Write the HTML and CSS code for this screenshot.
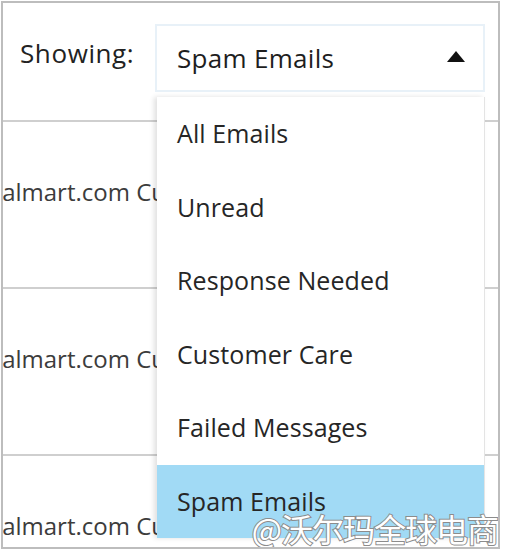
FILE: index.html
```html
<!DOCTYPE html>
<html lang="en">
<head>
    <meta charset="UTF-8">
    <meta name="viewport" content="width=device-width, initial-scale=1.0">
    <title>Showing: Spam Emails</title>
    <link rel="stylesheet" href="styles.css">
</head>
<body>
    <div class="frame">
        <div class="header">
            <span class="label">Showing:</span>
            <div class="select">
                <span>Spam Emails</span>
                <svg class="caret" width="18" height="11" viewBox="0 0 18 11">
                    <polygon points="9,0 18,11 0,11" fill="#111"></polygon>
                </svg>
            </div>
        </div>

        <div class="row"><span class="sender">Walmart.com Customer Care</span></div>
        <div class="row"><span class="sender">Walmart.com Customer Care</span></div>
        <div class="row last"><span class="sender">Walmart.com Customer Care</span></div>

        <ul class="menu">
            <li>All Emails</li>
            <li>Unread</li>
            <li>Response Needed</li>
            <li>Customer Care</li>
            <li>Failed Messages</li>
            <li class="active">Spam Emails</li>
        </ul>

        <div class="watermark">@沃尔玛全球电商</div>
    </div>
</body>
</html>
```

FILE: styles.css
```css
body {
    margin: 0;
    padding: 0;
    background-color: #ffffff;
    font-family: "Open Sans", "Noto Sans", sans-serif;
    color: #333;
}

.frame {
    position: relative;
    margin: 1px 0 0 1px;
    width: 495px;
    height: 544px;
    border: 2px solid #bdbdbd;
    overflow: hidden;
}

.header {
    height: 119px;
    border-bottom: 2px solid #cfcfcf;
    display: flex;
    align-items: flex-start;
    box-sizing: border-box;
    padding-top: 21px;
}

.label {
    margin-left: 17px;
    margin-top: 11px;
    width: 135px;
    font-size: 26px;
    letter-spacing: 0.6px;
    color: #222;
}

.select {
    width: 330px;
    height: 68px;
    box-sizing: border-box;
    border: 2px solid #e8f1f8;
    display: flex;
    align-items: center;
    justify-content: space-between;
    padding: 0 18px 0 20px;
    font-size: 26px;
    letter-spacing: 0.3px;
    color: #1e1e1e;
}

.caret {
    margin-top: -4px;
}

.row {
    height: 165px;
    border-bottom: 2px solid #cfcfcf;
    overflow: hidden;
}

.row.last {
    border-bottom: none;
}

.sender {
    display: block;
    margin-top: 52px;
    margin-left: -23px;
    white-space: nowrap;
    font-size: 24px;
    line-height: 36px;
    color: #3c3c3c;
}

.menu {
    position: absolute;
    left: 154px;
    top: 94px;
    width: 327px;
    margin: 0;
    padding: 0;
    list-style: none;
    background-color: #ffffff;
    border-right: 1px solid #e4e4e4;
    box-shadow: -3px 0 5px rgba(0, 0, 0, 0.12);
}

.menu li {
    height: 73.5px;
    line-height: 73.5px;
    padding-left: 20px;
    font-size: 25px;
    letter-spacing: 0.1px;
    color: #262626;
}

.menu li.active {
    background-color: #a1daf5;
}

.watermark {
    position: absolute;
    right: 0;
    bottom: 0;
    font-family: "Noto Sans CJK SC", sans-serif;
    font-size: 32px;
    line-height: 38px;
    color: #ffffff;
    -webkit-text-stroke: 2px #8c8c8c;
    paint-order: stroke fill;
    letter-spacing: -1px;
}
```
